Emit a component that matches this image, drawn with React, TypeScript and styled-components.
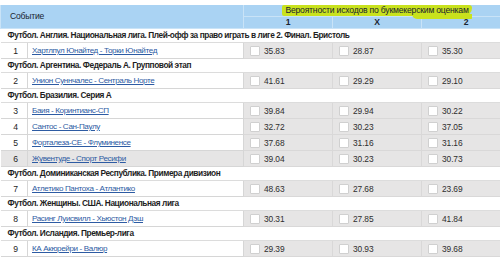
import styled, { createGlobalStyle } from 'styled-components';

const GlobalStyle = createGlobalStyle`
	html, body {
		margin: 0;
		padding: 0;
		background: #ffffff;
		overflow: hidden;
	}
	body {
		font-family: 'Liberation Sans', Arial, sans-serif;
	}
`;

const Page = styled.div`
	width: 500px;
	height: 259px;
	overflow: hidden;
	padding-top: 5px;
	box-sizing: border-box;
`;

const Table = styled.table`
	width: 510px;
	table-layout: fixed;
	border-collapse: collapse;
	font-size: 8px;
	color: #1e1e1e;
`;

const HeadCell = styled.th<{ $align?: string; $bold?: boolean }>`
	background: #aad3f3;
	border: 1px solid #c9e3f7;
	border-top: none;
	text-align: ${(p) => p.$align || 'center'};
	font-weight: ${(p) => (p.$bold ? 'bold' : 'normal')};
	padding: 0 0 0 ${(p) => (p.$align === 'left' ? '9px' : '0')};
	height: 11px;
	line-height: 11px;
	font-size: 8.6px;
	letter-spacing: -0.2px;
	color: #1a2430;
`;

const Highlight = styled.span`
	position: relative;
	display: inline-block;
	background: #c9e21d;
	padding: 0 3px 0 3px;
	line-height: 11px;
	border-radius: 2px 3px 8px 2px;
	z-index: 0;

	&::after {
		content: '';
		position: absolute;
		right: 0;
		bottom: -3px;
		width: 60px;
		height: 5px;
		background: #c9e21d;
		border-radius: 0 0 6px 40px;
		z-index: -1;
	}
`;

const GroupCell = styled.td`
	background: #ffffff;
	font-weight: bold;
	font-size: 8.3px;
	letter-spacing: -0.42px;
	height: 13px;
	padding: 0 0 0 7px;
	line-height: 13px;
	border: 1px solid #dcdcdc;
	border-left: none;
	border-right: none;
	white-space: nowrap;
	overflow: hidden;
`;

const NumCell = styled.td<{ $hover?: boolean }>`
	background: ${(p) => (p.$hover ? '#e6e5e5' : '#ffffff')};
	text-align: center;
	height: 15px;
	padding: 0 0 0 4px;
	border: 1px solid #d6d6d6;
	border-left: none;
	font-size: 8.6px;
`;

const TeamCell = styled.td<{ $hover?: boolean }>`
	background: ${(p) => (p.$hover ? '#e6e5e5' : '#ffffff')};
	padding: 0 0 0 4px;
	border: 1px solid #d6d6d6;
	white-space: nowrap;
	overflow: hidden;
`;

const TeamLink = styled.a`
	color: #2d5ba3;
	text-decoration: underline;
	font-size: 8.1px;
	letter-spacing: -0.38px;
	cursor: pointer;
`;

const OddsCell = styled.td`
	background: #e6e5e5;
	padding: 0 0 0 6px;
	border: 1px solid #d9d8d8;
	color: #2e2e2e;
	font-size: 8.4px;
	letter-spacing: -0.1px;
`;

const OddsInner = styled.div`
	display: flex;
	align-items: center;
	gap: 3px;
`;

const Box = styled.span`
	display: inline-block;
	width: 8px;
	height: 8px;
	background: #ffffff;
	border: 1px solid #d0d0d0;
	border-radius: 1px;
	margin-right: 1px;
`;

type Match = { n: number; teams: string; odds: [string, string, string]; hover?: boolean };
type Group = { title: string; matches: Match[] };

const groups: Group[] = [
	{
		title: 'Футбол. Англия. Национальная лига. Плей-офф за право играть в лиге 2. Финал. Бристоль',
		matches: [{ n: 1, teams: 'Хартлпул Юнайтед - Торки Юнайтед', odds: ['35.83', '28.87', '35.30'] }],
	},
	{
		title: 'Футбол. Аргентина. Федераль А. Групповой этап',
		matches: [{ n: 2, teams: 'Унион Суннчалес - Сентраль Норте', odds: ['41.61', '29.29', '29.10'] }],
	},
	{
		title: 'Футбол. Бразилия. Серия А',
		matches: [
			{ n: 3, teams: 'Баия - Коринтианс-СП', odds: ['39.84', '29.94', '30.22'] },
			{ n: 4, teams: 'Сантос - Сан-Паулу', odds: ['32.72', '30.23', '37.05'] },
			{ n: 5, teams: 'Форталеза-СЕ - Флуминенсе', odds: ['37.68', '31.16', '31.16'] },
			{ n: 6, teams: 'Жувентуде - Спорт Ресифи', odds: ['39.04', '30.23', '30.73'], hover: true },
		],
	},
	{
		title: 'Футбол. Доминиканская Республика. Примера дивизион',
		matches: [{ n: 7, teams: 'Атлетико Пантоха - Атлантико', odds: ['48.63', '27.68', '23.69'] }],
	},
	{
		title: 'Футбол. Женщины. США. Национальная лига',
		matches: [{ n: 8, teams: 'Расинг Луисвилл - Хьюстон Дэш', odds: ['30.31', '27.85', '41.84'] }],
	},
	{
		title: 'Футбол. Исландия. Премьер-лига',
		matches: [{ n: 9, teams: 'КА Акюрейри - Валюр', odds: ['29.39', '30.93', '39.68'] }],
	},
];

export default function App() {
	return (
		<Page>
			<GlobalStyle />
			<Table>
				<colgroup>
					<col style={{ width: 27 }} />
					<col style={{ width: 216 }} />
					<col style={{ width: 89 }} />
					<col style={{ width: 89 }} />
					<col style={{ width: 89 }} />
				</colgroup>
				<thead>
					<tr>
						<HeadCell colSpan={2} rowSpan={2} $align="left">
							Событие
						</HeadCell>
						<HeadCell colSpan={3}>
							<Highlight>Вероятности исходов по букмекерским оценкам</Highlight>
						</HeadCell>
					</tr>
					<tr>
						<HeadCell $bold>1</HeadCell>
						<HeadCell $bold>X</HeadCell>
						<HeadCell $bold>2</HeadCell>
					</tr>
				</thead>
				<tbody>
					{groups.map((g) => [
						<tr key={g.title}>
							<GroupCell colSpan={5}>{g.title}</GroupCell>
						</tr>,
						...g.matches.map((m) => (
							<tr key={m.n}>
								<NumCell $hover={m.hover}>{m.n}</NumCell>
								<TeamCell $hover={m.hover}>
									<TeamLink>{m.teams}</TeamLink>
								</TeamCell>
								{m.odds.map((o, i) => (
									<OddsCell key={i}>
										<OddsInner>
											<Box />
											{o}
										</OddsInner>
									</OddsCell>
								))}
							</tr>
						)),
					])}
				</tbody>
			</Table>
		</Page>
	);
}
